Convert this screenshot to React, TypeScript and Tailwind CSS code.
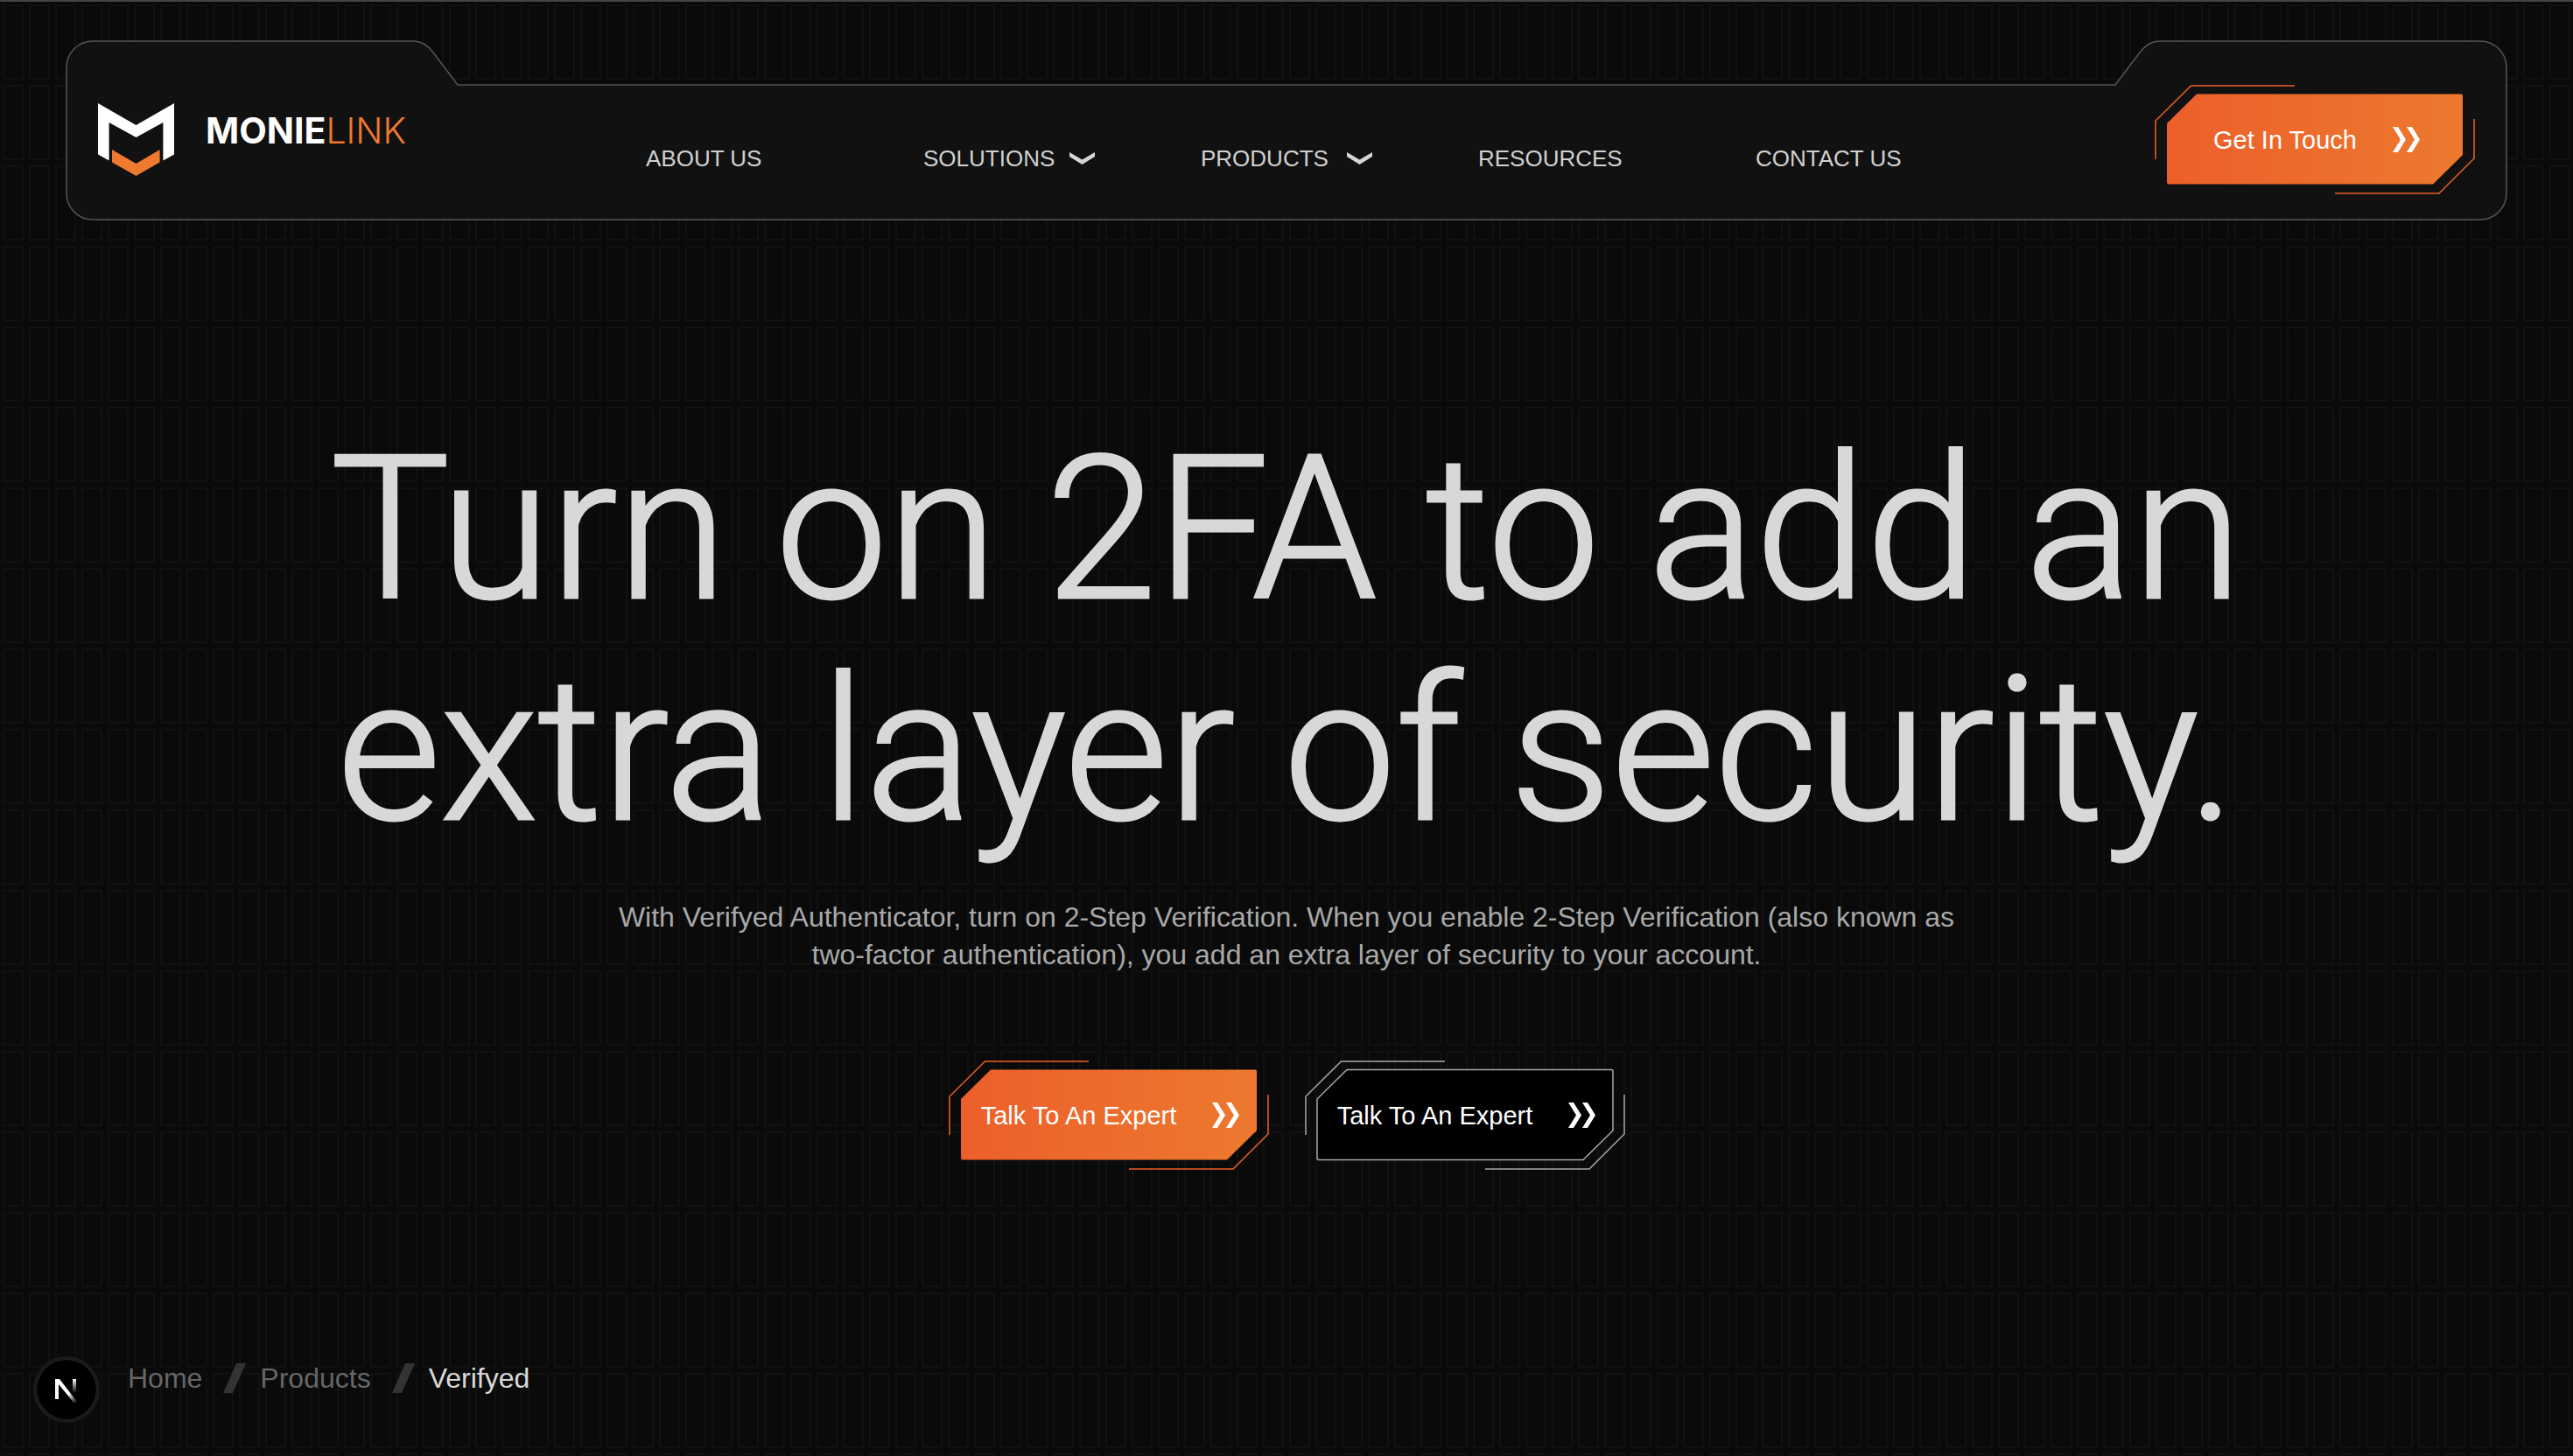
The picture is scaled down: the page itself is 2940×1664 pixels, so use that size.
import type { ReactNode } from "react";

function GridBackdrop() {
  return (
    <svg className="pointer-events-none absolute inset-0 h-full w-full" aria-hidden="true">
      <defs>
        <pattern id="cells" width="30" height="92" patternUnits="userSpaceOnUse">
          <rect x="4" y="4" width="22" height="84" fill="none" stroke="#111111" strokeWidth="2" />
        </pattern>
      </defs>
      <rect width="100%" height="100%" fill="url(#cells)" />
    </svg>
  );
}

function HeaderShape() {
  return (
    <svg
      className="pointer-events-none absolute inset-0 h-full w-full overflow-visible"
      viewBox="0 0 2788 204"
      preserveAspectRatio="none"
      aria-hidden="true"
    >
      <path
        d="M30 0 H396 C405 0 413 5 419 13 L447 50 H2341 L2369 13 C2375 5 2383 0 2392 0 H2758 A30 30 0 0 1 2788 30 V174 A30 30 0 0 1 2758 204 H30 A30 30 0 0 1 0 174 V30 A30 30 0 0 1 30 0 Z"
        fill="#111111"
        stroke="#555555"
        strokeWidth="1.5"
        vectorEffect="non-scaling-stroke"
      />
    </svg>
  );
}

function Logo() {
  return (
    <a href="#" className="flex w-[366px] items-center gap-9">
      <svg width="87" height="83" viewBox="0 0 87 83" aria-hidden="true">
        <path
          d="M0 0 L43.5 25 L87 0 V58.5 L74.4 65.5 V22 L43.5 39 L12.6 22 V65.5 L0 58.5 Z"
          fill="#ffffff"
        />
        <path d="M16 53 L43.5 69 L70.6 53 V67.5 L43.5 83 L16 67.5 Z" fill="#EF792F" />
      </svg>
      <span className="mb-5 font-['Inter',sans-serif] text-[41px] leading-none font-bold text-white">
        MONIE<span className="font-light text-[#EF792F]">LINK</span>
      </span>
    </a>
  );
}

function CaretDown() {
  return (
    <svg width="29" height="14" viewBox="0 0 29 14" aria-hidden="true">
      <path d="M0 0 L14.5 8.5 L29 0 V5 L14.5 14 L0 5 Z" fill="#D6D6D6" />
    </svg>
  );
}

const navItems = [
  { label: "ABOUT US", menu: false },
  { label: "SOLUTIONS", menu: true },
  { label: "PRODUCTS", menu: true },
  { label: "RESOURCES", menu: false },
  { label: "CONTACT US", menu: false },
];

function Nav() {
  return (
    <nav className="flex gap-[121px] pt-[62px] text-[26px] leading-8 text-[#D0D0D0]">
      {navItems.map((item) =>
        item.menu ? (
          <button key={item.label} className="flex w-[196px] items-center justify-between">
            {item.label}
            <CaretDown />
          </button>
        ) : (
          <a key={item.label} href="#" className="w-[196px]">
            {item.label}
          </a>
        ),
      )}
    </nav>
  );
}

function CutButton({ children, outline = false }: { children: ReactNode; outline?: boolean }) {
  const line = outline ? "#A8A8A8" : "#EC5F2A";
  return (
    <button className="relative flex h-[125px] w-[366px] items-center justify-center gap-[41px] pl-1 text-[29px] leading-8 text-white">
      <svg className="absolute inset-0" width="366" height="125" viewBox="0 0 366 125" aria-hidden="true">
        <defs>
          <linearGradient id="ember" x1="0" y1="0" x2="1" y2="0">
            <stop offset="0" stopColor="#ED5F2A" />
            <stop offset="1" stopColor="#EC792F" />
          </linearGradient>
        </defs>
        <path
          d="M48 10.5 H350 Q352 10.5 352 12.5 V80 L318 113.5 H16 Q14 113.5 14 111.5 V44 Z"
          fill={outline ? "#000000" : "url(#ember)"}
          stroke={outline ? line : "none"}
          strokeWidth="1.5"
        />
        <path
          d="M1 85 V41 L41.5 1 H160 M365 39 V84 L325 124 H206"
          fill="none"
          stroke={line}
          strokeWidth="1.5"
        />
      </svg>
      <span className="relative">{children}</span>
      <svg className="relative" width="31" height="29" viewBox="0 0 31 29" aria-hidden="true">
        <path
          d="M0 0 H6 L15 14.5 L6 29 H0 L9 14.5 Z M16 0 H22 L31 14.5 L22 29 H16 L25 14.5 Z"
          fill="#ffffff"
        />
      </svg>
    </button>
  );
}

function Slash() {
  return (
    <svg className="mr-4 ml-6" width="26" height="34" viewBox="0 0 26 34" aria-hidden="true">
      <path d="M15 0 H26 L11 34 H0 Z" fill="#333333" />
    </svg>
  );
}

function DevBadge() {
  return (
    <button
      aria-label="Open developer tools"
      className="absolute bottom-[38px] left-[38px] flex size-[76px] items-center justify-center rounded-full border-[3px] border-[#1a1a1a] bg-black pt-1 ring-1 ring-[#2c2c2c] ring-inset"
    >
      <svg width="26" height="28" viewBox="0 0 26 28" aria-hidden="true">
        <defs>
          <linearGradient id="nDiag" x1="15" y1="17" x2="24" y2="28" gradientUnits="userSpaceOnUse">
            <stop offset="0" stopColor="#fff" />
            <stop offset="1" stopColor="#fff" stopOpacity="0" />
          </linearGradient>
          <linearGradient id="nStem" x1="0" y1="0" x2="0" y2="16" gradientUnits="userSpaceOnUse">
            <stop offset="0" stopColor="#fff" />
            <stop offset="1" stopColor="#fff" stopOpacity="0" />
          </linearGradient>
        </defs>
        <path d="M0 0 H5 L25 26 L22 28 L4 6 V23 H0 Z" fill="url(#nDiag)" />
        <rect x="20" y="0" width="4" height="16" fill="url(#nStem)" />
      </svg>
    </button>
  );
}

export default function App() {
  return (
    <div className="relative flex min-h-screen flex-col border-t-2 border-[#444444] bg-[#0a0a0a] font-['Liberation_Sans',Arial,sans-serif]">
      <GridBackdrop />

      <header className="relative mx-[76px] mt-[45px] flex h-[204px] items-start justify-between px-9">
        <HeaderShape />
        <div className="relative pt-[71px]">
          <Logo />
        </div>
        <div className="relative pt-14">
          <Nav />
        </div>
        <div className="relative pt-[50px]">
          <CutButton>Get In Touch</CutButton>
        </div>
      </header>

      <main className="relative flex flex-col items-center pt-[228px] text-center">
        <h1 className="font-['Roboto',sans-serif] text-[228px] leading-[253px] font-light text-[#D8D8D8] [-webkit-text-stroke:3px_#D8D8D8]">
          Turn on 2FA to add an
          <br />
          extra layer of security.
        </h1>
        <p className="mt-[42px] max-w-[1560px] text-[32px] leading-[43px] text-[#A8A8A8]">
          With Verifyed Authenticator, turn on 2-Step Verification. When you enable 2-Step Verification (also known as
          two-factor authentication), you add an extra layer of security to your account.
        </p>
        <div className="mt-[99px] flex gap-[41px]">
          <CutButton>Talk To An Expert</CutButton>
          <CutButton outline>Talk To An Expert</CutButton>
        </div>
      </main>

      <nav
        aria-label="Breadcrumb"
        className="relative mt-auto flex items-center pb-[69px] pl-[146px] text-[32px] leading-10 text-[#666666]"
      >
        <a href="#">Home</a>
        <Slash />
        <a href="#">Products</a>
        <Slash />
        <span aria-current="page" className="text-[#D8D8D8]">
          Verifyed
        </span>
      </nav>

      <DevBadge />
    </div>
  );
}
